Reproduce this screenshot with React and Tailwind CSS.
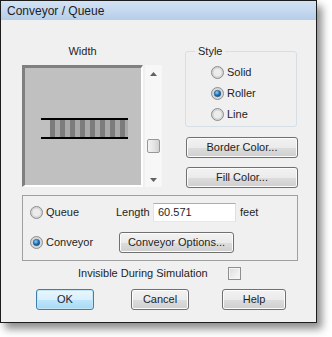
import React from 'react';

// Win7-style radio button, drawn as a small svg
const Radio = ({ checked }) => (
  <svg width="13" height="13" viewBox="0 0 13 13" className="shrink-0">
    <defs>
      <radialGradient id="rbg" cx="0.5" cy="0.5" r="0.6">
        <stop offset="0" stopColor="#f4f4f4" />
        <stop offset="1" stopColor="#c9c9c9" />
      </radialGradient>
      <radialGradient id="rdot" cx="0.4" cy="0.35" r="0.7">
        <stop offset="0" stopColor="#8fd1f7" />
        <stop offset="0.6" stopColor="#1f6fb5" />
        <stop offset="1" stopColor="#0b3e72" />
      </radialGradient>
    </defs>
    <circle cx="6.5" cy="6.5" r="6" fill="url(#rbg)" stroke="#8c8f8f" strokeWidth="1" />
    <circle cx="6.5" cy="6.5" r="4.3" fill="#ececec" stroke="#d0d0d0" strokeWidth="0.6" />
    {checked && <circle cx="6.5" cy="6.5" r="3.3" fill="url(#rdot)" stroke="#1c4f80" strokeWidth="0.5" />}
  </svg>
);

const RadioRow = ({ label, checked }) => (
  <div className="flex items-center h-[20px] gap-[3px]">
    <Radio checked={checked} />
    <span>{label}</span>
  </div>
);

const WinButton = ({ children, className = '', primary = false }) => (
  <button
    className={
      'h-[21px] rounded-[3px] border text-[#1e1e1e] leading-none ' +
      (primary
        ? 'border-[#3c7fb1] bg-[linear-gradient(to_bottom,#eaf6fd_0%,#d9f0fc_50%,#bee6fd_51%,#a7d9f5_100%)] shadow-[inset_0_0_0_1px_#c4e5f6] '
        : 'border-[#707070] bg-[linear-gradient(to_bottom,#f2f2f2_0%,#ebebeb_50%,#dddddd_51%,#cfcfcf_100%)] shadow-[inset_0_0_0_1px_#fcfcfc] ') +
      className
    }
  >
    {children}
  </button>
);

const Preview = () => (
  <div className="flex">
    <div className="w-[121px] h-[122px] border-t-[3px] border-l-[3px] border-r-2 border-b-2 border-t-[#808080] border-l-[#808080] border-r-white border-b-white bg-[#c0c0c0] pl-[16px] pt-[50px]">
      <svg width="87" height="21" viewBox="0 0 87 21">
        {[0, 1, 2, 3, 4, 5, 6, 7].map((i) => (
          <g key={i}>
            <rect x={9 + i * 10} y="2" width="5" height="17" fill="#7c7c7c" />
            <rect x={14 + i * 10} y="2" width="5" height="17" fill="#a9a9a9" />
          </g>
        ))}
        <rect x="0" y="0" width="87" height="2" fill="#000" />
        <rect x="0" y="19" width="87" height="2" fill="#000" />
      </svg>
    </div>
    <div className="ml-[2px] w-[17px] h-[122px] bg-[#f7f7f7] flex flex-col">
      <div className="h-[17px] flex items-center justify-center">
        <svg width="7" height="4" viewBox="0 0 7 4"><path d="M0 4 L3.5 0 L7 4 Z" fill="#606060" /></svg>
      </div>
      <div className="flex-1 px-[2px] pt-[57px]">
        <div className="h-[14px] rounded-[2px] border border-[#979797] bg-[linear-gradient(to_right,#f3f3f3,#e3e3e3_55%,#d2d2d2)]" />
      </div>
      <div className="h-[17px] flex items-center justify-center pt-[3px]">
        <svg width="7" height="4" viewBox="0 0 7 4"><path d="M0 0 L3.5 4 L7 0 Z" fill="#606060" /></svg>
      </div>
    </div>
  </div>
);

export default function App() {
  return (
    <div className="w-[332px] h-[337px] bg-white font-['Liberation_Sans',Arial,sans-serif] text-[11px] text-[#1e1e1e]">
      <div className="w-[317px] h-[323px] border border-[#1c1c1c] bg-[#f0f0f0] shadow-[5px_6px_8px_rgba(0,0,0,0.45)] flex flex-col">
        <div className="h-[19px] bg-[linear-gradient(to_bottom,#d4e3f5,#b6cee9)] pl-[6px] flex items-center text-[12px] text-[#1e1e1e]">
          Conveyor / Queue
        </div>

        <div className="flex pl-[21px] pt-[24px]">
          <div className="w-[141px]">
            <div className="w-[121px] h-[15px] leading-[15px] text-center">Width</div>
            <div className="mt-[6px]">
              <Preview />
            </div>
          </div>

          <div className="ml-[22px] w-[113px]">
            <fieldset className="w-[112px] border border-[#d5dfe5] rounded-[3px] pb-[2px]">
              <legend className="ml-[9px] px-[3px] leading-[15px]">Style</legend>
              <div className="pt-[3px] pl-[25px] flex flex-col gap-[1px]">
                <RadioRow label="Solid" />
                <RadioRow label="Roller" checked />
                <RadioRow label="Line" />
              </div>
            </fieldset>
            <WinButton className="mt-[10px] w-[112px] ml-[1px]">Border Color...</WinButton>
            <WinButton className="mt-[9px] w-[112px] ml-[1px]">Fill Color...</WinButton>
          </div>
        </div>

        <div className="mt-[7px] ml-[21px] w-[276px] border border-[#a0a0a0] pt-[7px] pb-[7px] pl-[7px]">
          <div className="flex items-center h-[19px]">
            <div className="w-[86px] flex items-center gap-[3px]">
              <Radio />
              <span>Queue</span>
            </div>
            <span className="w-[37px]">Length</span>
            <div className="w-[83px] h-[19px] border border-[#abadb3] border-l-[#e2e3ea] border-r-[#dbdfe6] border-b-[#e3e9ef] bg-white pl-[4px] flex items-center">
              60.571
            </div>
            <span className="ml-[4px]">feet</span>
          </div>
          <div className="flex items-center h-[21px] mt-[10px]">
            <div className="w-[89px] flex items-center gap-[3px]">
              <Radio checked />
              <span>Conveyor</span>
            </div>
            <WinButton className="w-[115px]">Conveyor Options...</WinButton>
          </div>
        </div>

        <div className="flex items-center h-[16px] mt-[4px] pl-[77px]">
          <span className="w-[150px]">Invisible During Simulation</span>
          <span className="w-[13px] h-[13px] border border-[#8f8f8f] bg-[linear-gradient(135deg,#dcdcdc,#fbfbfb)] shadow-[inset_0_0_0_1px_#f4f4f4]" />
        </div>

        <div className="flex mt-[8px] pl-[35px]">
          <WinButton primary className="w-[58px]">OK</WinButton>
          <WinButton className="w-[58px] ml-[37px]">Cancel</WinButton>
          <WinButton className="w-[64px] ml-[33px]">Help</WinButton>
        </div>
      </div>
    </div>
  );
}
